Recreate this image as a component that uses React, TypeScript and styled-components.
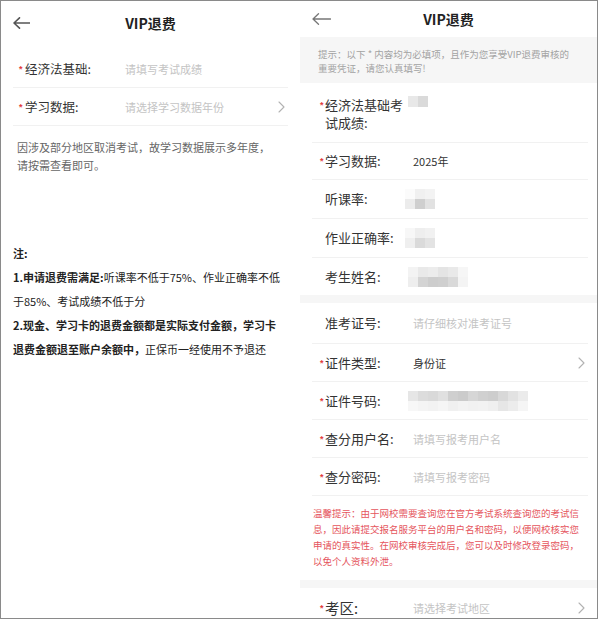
import React from "react";
import styled, { createGlobalStyle } from "styled-components";

const Global = createGlobalStyle`
  html, body { margin: 0; padding: 0; background: #fff; }
  body { font-family: "Noto Sans CJK SC", "Noto Sans", sans-serif; color: #333; }
  * { box-sizing: border-box; }
`;

const Frame = styled.div`
  width: 598px;
  height: 619px;
  border: 1px solid #8a8a8a;
  display: flex;
  overflow: hidden;
  background: #fff;
`;

const LeftScreen = styled.div`
  width: 299px;
  display: flex;
  flex-direction: column;
`;

const RightScreen = styled.div`
  flex: 1;
  min-width: 0;
  display: flex;
  flex-direction: column;
`;

const Header = styled.div<{ $h: number }>`
  height: ${(p) => p.$h}px;
  padding: 0 12px;
  display: grid;
  grid-template-columns: 40px 1fr 40px;
  align-items: center;
  flex-shrink: 0;
`;

const BackButton = styled.div`
  display: flex;
  align-items: center;
`;

const Title = styled.div`
  text-align: center;
  font-size: 14px;
  font-weight: 700;
  color: #222;
  line-height: 20px;
`;

const LeftForm = styled.div`
  margin: 5px 12px 0;
`;

const Row = styled.div<{ $h: number; $line?: boolean; $top?: number }>`
  display: flex;
  align-items: ${(p) => (p.$top !== undefined ? "flex-start" : "center")};
  padding-top: ${(p) => p.$top ?? 0}px;
  height: ${(p) => p.$h}px;
  border-bottom: ${(p) => (p.$line ? "1px solid #f1f1f1" : "none")};
  flex-shrink: 0;
`;

const Star = styled.span<{ $ml: number; $w: number }>`
  width: ${(p) => p.$w}px;
  margin-left: ${(p) => p.$ml}px;
  flex-shrink: 0;
  color: #e23b3b;
  font-size: 9px;
  line-height: 18px;
  font-family: "Liberation Sans", sans-serif;
  font-weight: 700;
`;

const Label = styled.div<{ $w: number; $size: number }>`
  width: ${(p) => p.$w}px;
  flex-shrink: 0;
  font-size: ${(p) => p.$size}px;
  line-height: 18px;
  color: #333;
`;

const Value = styled.div<{ $ph?: boolean }>`
  flex: 1;
  font-size: 11px;
  line-height: 18px;
  color: ${(p) => (p.$ph ? "#c4c4c4" : "#333")};
  display: flex;
  align-items: center;
`;

const Chevron = styled.div`
  margin-right: 3px;
  display: flex;
  align-items: center;
`;

const NoteText = styled.p`
  margin: 12px 0 0;
  padding: 0 16px;
  font-size: 11px;
  line-height: 18px;
  color: #666;
`;

const Notes = styled.div`
  margin-top: 67px;
  padding: 0 12px;
  font-size: 11px;
  line-height: 24px;
  color: #222;
  white-space: nowrap;
`;

const NoteLine = styled.p`
  margin: 0;
`;

const Strong = styled.b`
  font-weight: 700;
`;

const HintBand = styled.div`
  height: 46px;
  flex-shrink: 0;
  background: #f6f6f6;
  padding: 10px 18px 0;
  font-size: 9.5px;
  line-height: 14px;
  color: #a3a3a3;
  white-space: nowrap;
`;

const Gap = styled.div`
  height: 8px;
  flex-shrink: 0;
  background: #f6f6f6;
`;

const Group = styled.div`
  margin: 0 9px 0 12px;
  flex-shrink: 0;
`;

const Warn = styled.div`
  height: 84px;
  padding: 9px 0 0 1px;
  font-size: 9.5px;
  line-height: 16px;
  color: #e5555d;
  white-space: nowrap;
`;

const MosaicGrid = styled.div<{ $cols: number; $cw: number; $ch: number; $ml: number }>`
  display: grid;
  grid-template-columns: repeat(${(p) => p.$cols}, ${(p) => p.$cw}px);
  grid-auto-rows: ${(p) => p.$ch}px;
  margin-left: ${(p) => p.$ml}px;
`;

const Cell = styled.div<{ $c: string }>`
  background: ${(p) => p.$c};
`;

function Mosaic({ rows, cw, ch, ml = -5 }: { rows: string[][]; cw: number; ch: number; ml?: number }) {
  return (
    <MosaicGrid $cols={rows[0].length} $cw={cw} $ch={ch} $ml={ml}>
      {rows.flat().map((c, i) => (
        <Cell key={i} $c={c} />
      ))}
    </MosaicGrid>
  );
}

function BackArrow({ w, color, sw }: { w: number; color: string; sw: number }) {
  return (
    <svg width={w} height={12} viewBox={`0 0 ${w} 12`} fill="none">
      <path d={`M${w - 0.5} 6 H1 M6.5 0.8 L1 6 L6.5 11.2`} stroke={color} strokeWidth={sw} strokeLinecap="round" strokeLinejoin="round" />
    </svg>
  );
}

function ChevronIcon() {
  return (
    <svg width={7} height={12} viewBox="0 0 7 12" fill="none">
      <polyline points="1,1 6,6 1,11" stroke="#b2b2b2" strokeWidth={1.1} strokeLinecap="round" strokeLinejoin="round" />
    </svg>
  );
}

const LStar = () => (
  <Star $ml={6} $w={6}>
    *
  </Star>
);
const RStar = ({ show = true }: { show?: boolean }) => (
  <Star $ml={8} $w={5}>
    {show ? "*" : ""}
  </Star>
);

export default function App() {
  return (
    <>
      <Global />
      <Frame>
        <LeftScreen>
          <Header $h={44}>
            <BackButton>
              <BackArrow w={17} color="#555" sw={1.6} />
            </BackButton>
            <Title>VIP退费</Title>
            <span />
          </Header>
          <LeftForm>
            <Row $h={38} $line>
              <LStar />
              <Label $w={100} $size={12.5}>经济法基础:</Label>
              <Value $ph>请填写考试成绩</Value>
            </Row>
            <Row $h={38} $line>
              <LStar />
              <Label $w={100} $size={12.5}>学习数据:</Label>
              <Value $ph>请选择学习数据年份</Value>
              <Chevron>
                <ChevronIcon />
              </Chevron>
            </Row>
          </LeftForm>
          <NoteText>
            因涉及部分地区取消考试，故学习数据展示多年度，
            <br />
            请按需查看即可。
          </NoteText>
          <Notes>
            <NoteLine>
              <Strong>注:</Strong>
            </NoteLine>
            <NoteLine>
              <Strong>1.申请退费需满足:</Strong>听课率不低于75%、作业正确率不低
              <br />
              于85%、考试成绩不低于分
            </NoteLine>
            <NoteLine>
              <Strong>
                2.现金、学习卡的退费金额都是实际支付金额，学习卡
                <br />
                退费金额退至账户余额中，
              </Strong>
              正保币一经使用不予退还
            </NoteLine>
          </Notes>
        </LeftScreen>

        <RightScreen>
          <Header $h={36}>
            <BackButton>
              <BackArrow w={19} color="#777" sw={1.3} />
            </BackButton>
            <Title>VIP退费</Title>
            <span />
          </Header>
          <HintBand>
            提示：以下 * 内容均为必填项，且作为您享受VIP退费审核的
            <br />
            重要凭证，请您认真填写!
          </HintBand>
          <Group>
            <Row $h={60} $line $top={13}>
              <RStar />
              <Label $w={88} $size={13}>经济法基础考试成绩:</Label>
              <Value>
                <Mosaic cw={10} ch={11} rows={[["#e8e8e8", "#dadada"]]} />
              </Value>
            </Row>
            <Row $h={37} $line>
              <RStar />
              <Label $w={88} $size={13}>学习数据:</Label>
              <Value>2025年</Value>
            </Row>
            <Row $h={39} $line>
              <RStar show={false} />
              <Label $w={88} $size={13}>听课率:</Label>
              <Value>
                <Mosaic
                  cw={10}
                  ch={10}
                  ml={-8}
                  rows={[
                    ["#fbfbfb", "#f0f0f0", "#f3f3f3"],
                    ["#ececec", "#cfcfcf", "#e2e2e2"],
                  ]}
                />
              </Value>
            </Row>
            <Row $h={39} $line>
              <RStar show={false} />
              <Label $w={88} $size={13}>作业正确率:</Label>
              <Value>
                <Mosaic
                  cw={10}
                  ch={10}
                  ml={-8}
                  rows={[
                    ["#f7f7f7", "#eeeeee", "#f1f1f1"],
                    ["#efefef", "#dadada", "#e3e3e3"],
                  ]}
                />
              </Value>
            </Row>
            <Row $h={37}>
              <RStar show={false} />
              <Label $w={88} $size={13}>考生姓名:</Label>
              <Value>
                <Mosaic
                  cw={10}
                  ch={10}
                  rows={[
                    ["#f3f3f3", "#e9e9e9", "#ececec", "#e4e4e4", "#e9e9e9", "#f6f6f6"],
                    ["#eeeeee", "#d4d4d4", "#cdcdcd", "#cfcfcf", "#d9d9d9", "#f4f4f4"],
                  ]}
                />
              </Value>
            </Row>
          </Group>
          <Gap />
          <Group>
            <Row $h={41} $line>
              <RStar show={false} />
              <Label $w={88} $size={13}>准考证号:</Label>
              <Value $ph>请仔细核对准考证号</Value>
            </Row>
            <Row $h={38} $line>
              <RStar />
              <Label $w={88} $size={13}>证件类型:</Label>
              <Value>身份证</Value>
              <Chevron>
                <ChevronIcon />
              </Chevron>
            </Row>
            <Row $h={38} $line>
              <RStar />
              <Label $w={88} $size={13}>证件号码:</Label>
              <Value>
                <Mosaic
                  cw={10}
                  ch={10}
                  rows={[
                    ["#e6e6e6", "#dcdcdc", "#d9d9d9", "#e0e0e0", "#cfcfcf", "#cbcbcb", "#d6d6d6", "#d0d0d0", "#cdcdcd", "#d8d8d8", "#e2e2e2", "#ebebeb"],
                    ["#f7f7f7", "#f4f4f4", "#f2f2f2", "#f5f5f5", "#f0f0f0", "#f3f3f3", "#f1f1f1", "#f2f2f2", "#efefef", "#e6e6e6", "#ececec", "#f5f5f5"],
                  ]}
                />
              </Value>
            </Row>
            <Row $h={38} $line>
              <RStar />
              <Label $w={88} $size={13}>查分用户名:</Label>
              <Value $ph>请填写报考用户名</Value>
            </Row>
            <Row $h={38} $line>
              <RStar />
              <Label $w={88} $size={13}>查分密码:</Label>
              <Value $ph>请填写报考密码</Value>
            </Row>
            <Warn>
              温馨提示：由于网校需要查询您在官方考试系统查询您的考试信
              <br />
              息，因此请提交报名服务平台的用户名和密码，以便网校核实您
              <br />
              申请的真实性。在网校审核完成后，您可以及时修改登录密码，
              <br />
              以免个人资料外泄。
            </Warn>
          </Group>
          <Gap />
          <Group>
            <Row $h={40}>
              <RStar />
              <Label $w={88} $size={14.5}>考区:</Label>
              <Value $ph>请选择考试地区</Value>
              <Chevron>
                <ChevronIcon />
              </Chevron>
            </Row>
          </Group>
        </RightScreen>
      </Frame>
    </>
  );
}
